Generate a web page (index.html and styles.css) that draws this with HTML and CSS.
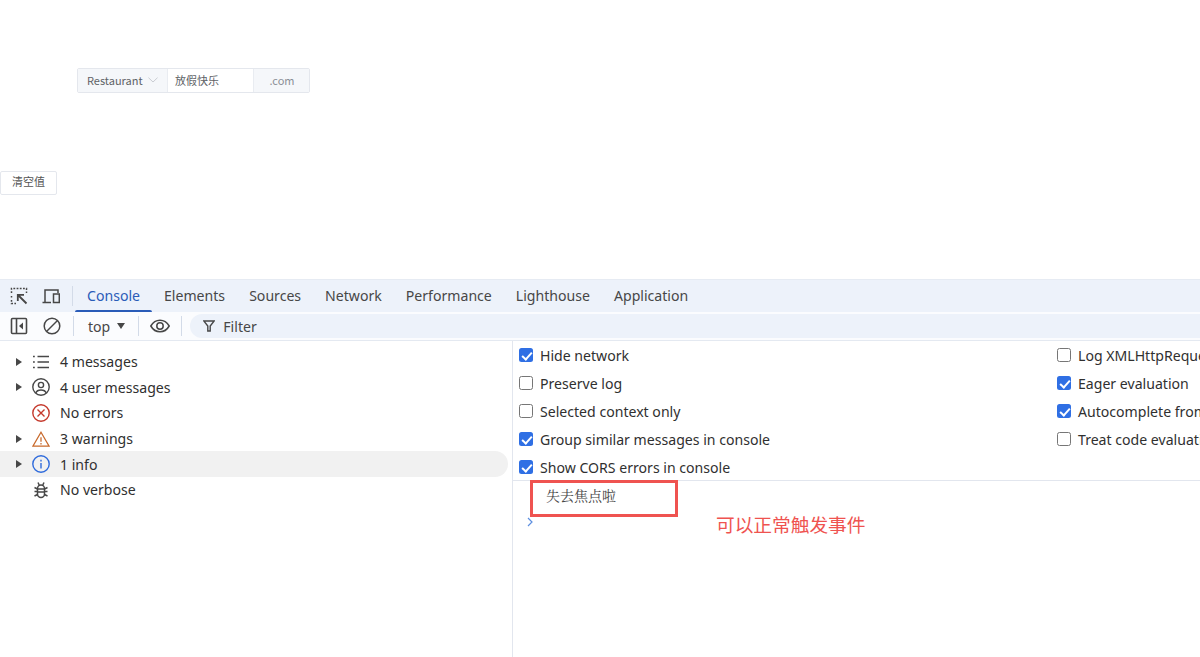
FILE: index.html
```html
<!DOCTYPE html>
<html lang="zh">
<head>
<meta charset="utf-8">
<title>Console</title>
<link rel="stylesheet" href="styles.css">
</head>
<body>
<section class="page">
  <div class="input-group">
    <div class="addon select">Restaurant
      <svg class="chev" width="10" height="6" viewBox="0 0 10 6"><path d="M.5.7 5 5 9.500.7" fill="none" stroke="#c4c7cd" stroke-width=".9"/></svg>
    </div>
    <div class="field">放假快乐</div>
    <div class="addon suffix">.com</div>
  </div>
  <button class="btn">清空值</button>
</section>
<section class="devtools">
  <nav class="tabs">
    <svg class="tool first" width="18" height="18" viewBox="0 0 18 18" fill="none" stroke="#474747" stroke-width="1.500"><path d="M1.500 6V1.500H16.500V6M1.500 9v1.500M1.500 13v3.500H6" stroke-dasharray="1.800 1.400"/><path d="M16.500 16.500 8 8M7.800 14V7.800H14" stroke-width="1.800"/></svg>
    <svg class="tool second" width="18" height="18" viewBox="0 0 18 18" fill="none" stroke="#474747" stroke-width="1.500"><path d="M3 15V3h13v3M.5 15.500H9"/><rect x="11.500" y="7" width="5.800" height="8.500"/></svg>
    <span class="vsep"></span>
    <a class="tab active">Console</a>
    <a class="tab">Elements</a>
    <a class="tab">Sources</a>
    <a class="tab">Network</a>
    <a class="tab">Performance</a>
    <a class="tab">Lighthouse</a>
    <a class="tab">Application</a>
  </nav>
  <div class="toolbar">
    <svg class="tool first bar-one" width="18" height="18" viewBox="0 0 18 18" fill="none" stroke="#474747" stroke-width="1.600"><rect x="1.500" y="1.500" width="15" height="15" rx="1"/><path d="M6.500 1.500v15"/><path d="M13 5.500v7L9 9z" fill="#474747" stroke="none"/></svg>
    <svg class="tool second" width="18" height="18" viewBox="0 0 18 18" fill="none" stroke="#474747" stroke-width="1.500"><circle cx="9" cy="9" r="7.800"/><path d="M3.500 14.500l11-11"/></svg>
    <span class="vsep"></span>
    <span class="context">top <i class="caret"></i></span>
    <span class="vsep"></span>
    <svg class="eye" width="20" height="14" viewBox="0 0 20 14" fill="none" stroke="#474747" stroke-width="1.500"><path d="M.8 7C3 3.200 6.200 1.200 10 1.200S17 3.200 19.200 7C17 10.800 13.800 12.800 10 12.800S3 10.800.8 7z"/><circle cx="10" cy="7" r="3.200"/></svg>
    <span class="vsep"></span>
    <div class="filter">
      <svg width="12" height="12" viewBox="0 0 12 12" fill="none" stroke="#474747" stroke-width="1.400"><path d="M.8 1h10.400L7.200 6v5H4.800V6z"/></svg>
      Filter
    </div>
  </div>
  <div class="panes">
    <aside class="sidebar">
      <div class="row"><i class="tri"></i>
        <svg class="ico" width="18" height="18" viewBox="0 0 18 18" fill="none" stroke="#474747" stroke-width="1.500"><path d="M5.500 3.500H17M5.500 9H17M5.500 14.500H17M1 3.500h1.800M1 9h1.800M1 14.500h1.800"/></svg>
        <span>4 messages</span></div>
      <div class="row"><i class="tri"></i>
        <svg class="ico" width="18" height="18" viewBox="0 0 18 18" fill="none" stroke="#474747" stroke-width="1.400"><circle cx="9" cy="9" r="8.200"/><circle cx="9" cy="7" r="2.600"/><path d="M3.800 15c.8-2.300 2.600-3 5.200-3s4.400.7 5.200 3"/></svg>
        <span>4 user messages</span></div>
      <div class="row"><i class="tri none"></i>
        <svg class="ico" width="18" height="18" viewBox="0 0 18 18" fill="none" stroke="#c5392c" stroke-width="1.400"><circle cx="9" cy="9" r="8.200"/><path d="M5.500 5.500l7 7M12.500 5.500l-7 7"/></svg>
        <span>No errors</span></div>
      <div class="row"><i class="tri"></i>
        <svg class="ico" width="20" height="18" viewBox="0 0 20 18" fill="none" stroke="#c8692b" stroke-width="1.400"><path d="M10 1.500 19 17H1z"/><path d="M10 7v5M10 13.500v1.500"/></svg>
        <span>3 warnings</span></div>
      <div class="row hover"><i class="tri"></i>
        <svg class="ico" width="18" height="18" viewBox="0 0 18 18" fill="none" stroke="#2f6bdc" stroke-width="1.400"><circle cx="9" cy="9" r="8.200"/><path d="M9 8v5.500M9 4.800v1.600"/></svg>
        <span>1 info</span></div>
      <div class="row"><i class="tri none"></i>
        <svg class="ico" width="18" height="18" viewBox="0 0 18 18" fill="none" stroke="#474747" stroke-width="1.500"><path d="M6 1.500 7.200 4M12 1.500 10.800 4M2.500 6.500l3 1.500M15.500 6.500l-3 1.500M2.500 10.500h3M15.500 10.500h-3M2.500 15l3-1.500M15.500 15l-3-1.500"/><rect x="5.500" y="4" width="7" height="12.500" rx="3.500"/><path d="M5.500 8h7M5.500 11h7"/></svg>
        <span>No verbose</span></div>
    </aside>
    <main class="main">
      <div class="settings">
        <div class="col">
          <label class="opt"><i class="cb on"></i>Hide network</label>
          <label class="opt"><i class="cb"></i>Preserve log</label>
          <label class="opt"><i class="cb"></i>Selected context only</label>
          <label class="opt"><i class="cb on"></i>Group similar messages in console</label>
          <label class="opt"><i class="cb on"></i>Show CORS errors in console</label>
        </div>
        <div class="col right">
          <label class="opt"><i class="cb"></i>Log XMLHttpRequests</label>
          <label class="opt"><i class="cb on"></i>Eager evaluation</label>
          <label class="opt"><i class="cb on"></i>Autocomplete from history</label>
          <label class="opt"><i class="cb"></i>Treat code evaluation as user action</label>
        </div>
      </div>
      <div class="log">失去焦点啦</div>
      <svg class="prompt" width="8" height="10" viewBox="0 0 8 10" fill="none" stroke="#5d8fe0" stroke-width="1.200"><path d="M2 1l4 4-4 4"/></svg>
    </main>
  </div>
  <div class="mark"></div>
  <div class="note">可以正常触发事件</div>
</section>
</body>
</html>
```
FILE: styles.css
```css
* { box-sizing: border-box; }
html, body { margin: 0; height: 657px; overflow: hidden; background: #fff; }
body { font-family: "Noto Sans", "Noto Sans CJK SC", sans-serif; color: #303030; }

.page { height: 279px; padding-top: 68px; position: relative; }
.input-group {
  margin-left: 77px; width: 233px; height: 25px; display: flex;
  border: 1px solid #e4e7ed; border-radius: 2px; font-size: 11px; color: #606266;
  font-family: "Noto Sans CJK SC", "Noto Sans", sans-serif;
}
.addon { background: #f5f7fa; display: flex; align-items: center; }
.select { width: 90px; padding: 0 0 1px 9px; gap: 5px; border-right: 1px solid #e9ecf1; white-space: nowrap; }
.field { width: 85px; padding: 0 0 2px 7px; display: flex; align-items: center; background: #fff; }
.suffix { flex: 1; justify-content: center; border-left: 1px solid #e9ecf1; color: #8b8f97; padding: 0 0 2px 1px; }
.btn {
  display: block; margin-top: 78px; width: 57px; height: 24px; padding: 0 0 5px;
  background: #fff; border: 1px solid #e4e7ed; border-radius: 2px;
  font: 11px "Noto Sans CJK SC", sans-serif; color: #555;
}

.devtools { position: relative; height: 378px; font-size: 14.100px; }
.tabs {
  height: 33px; background: #edf2fa; display: flex; align-items: center;
  border-top: 1px solid #e6ebf3; color: #474747;
}
.tool { flex: none; margin-right: 14px; }
.tool.first { margin-left: 10px; }
.tool.bar-one { margin-right: 15px; }
.tool.second { margin-right: 12px; }
.vsep { width: 1px; height: 20px; background: #d3dbe8; flex: none; }
.tab { padding: 0 12px; height: 32px; line-height: 32px; position: relative; }
.tab.active { color: #2a5cb8; margin-left: 2px; }
.tab.active::after {
  content: ""; position: absolute; left: 0; right: 0; bottom: 0; height: 2px;
  background: #2a5cb8; border-radius: 2px 2px 0 0;
}
.toolbar {
  height: 29px; display: flex; align-items: center; background: #fbfcfe;
  border-bottom: 1px solid #e4e9f1; color: #474747;
}
.context { margin: 0 13px 0 14px; display: flex; align-items: center; gap: 7px; }
.caret { width: 0; height: 0; border: 4.500px solid transparent; border-top: 6px solid #474747; border-bottom: 0; }
.eye { margin: 0 11px; flex: none; }
.filter {
  margin-left: 8px; flex: 1; height: 24px; border-radius: 12px 0 0 12px; background: #edf2fa;
  display: flex; align-items: center; gap: 8px; padding-left: 13px;
}

.panes { display: flex; height: 316px; }
.sidebar { width: 513px; flex: none; border-right: 1px solid #e2e6ee; padding-top: 8px; }
.row { height: 25.600px; display: flex; align-items: center; border-radius: 0 13px 13px 0; width: 508px; padding-left: 16px; white-space: nowrap; }
.row.hover { background: #f1f1f1; }
.tri { width: 0; height: 0; border: 4px solid transparent; border-left: 6px solid #474747; border-right: 0; margin-right: 10px; flex: none; }
.tri.none { visibility: hidden; }
.ico { flex: none; margin-right: 10px; width: 18px; }

.main { flex: 1; position: relative; min-width: 0; overflow: hidden; }
.settings { display: flex; height: 140px; border-bottom: 1px solid #e2e6ee; }
.col { width: 544px; padding-left: 6px; flex: none; }
.col.right { width: 300px; padding-left: 0; }
.opt { display: flex; align-items: center; height: 28px; white-space: nowrap; }
.cb { width: 14px; height: 14px; border: 1.300px solid #767676; border-radius: 2.500px; margin-right: 7px; flex: none; background: #fff; }
.cb.on { border: 0; background: #2f6fe4; position: relative; }
.cb.on::after {
  content: ""; position: absolute; left: 5px; top: 2px; width: 4px; height: 8px;
  border: solid #fff; border-width: 0 2px 2px 0; transform: rotate(42deg);
}
.log { padding: 4px 0 0 33px; font: 14px "Noto Serif CJK SC", "Noto Sans CJK SC", serif; color: #474747; }
.prompt { position: absolute; left: 13px; top: 176px; }

.mark { position: absolute; left: 530px; top: 201px; width: 148px; height: 37px; border: 3px solid #ef5350; }
.note { position: absolute; left: 716px; top: 231px; font: 18.700px "Noto Sans CJK SC", sans-serif; color: #ef5350; }
```
